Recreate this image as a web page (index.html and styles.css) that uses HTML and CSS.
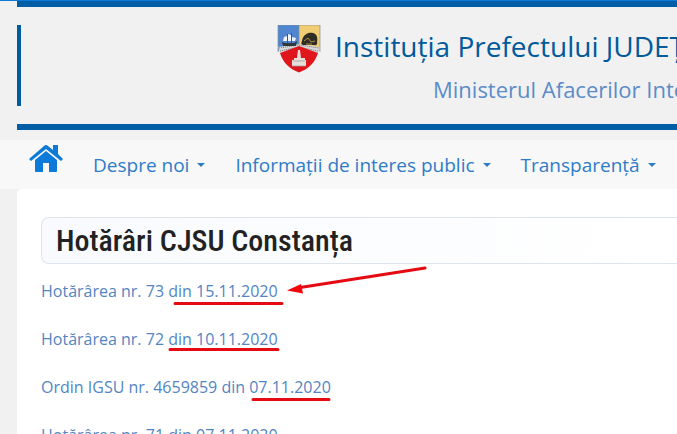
FILE: index.html
```html
<!DOCTYPE html>
<html lang="ro">
<head>
<meta charset="UTF-8">
<meta name="viewport" content="width=device-width, initial-scale=1.0">
<title>Hotărâri CJSU Constanța</title>
<link rel="stylesheet" href="styles.css">
</head>
<body>
    <header class="header">
        <div class="brand">
            <svg class="crest" viewBox="0 0 44 48" aria-hidden="true">
                <path fill="#4f86cf" d="M1 0H22V22L1 26Z"/>
                <path fill="#f0cc72" d="M22 0H43V26L22 22Z"/>
                <path fill="#d9d9d9" d="M1 22L22 19L43 22L41 29L22 23L3 29Z"/>
                <path fill="none" stroke="#777" stroke-width="1" stroke-dasharray="1 1" d="M2 23L22 20L42 23M3 26L22 22L41 26"/>
                <path fill="#e0161d" d="M3 28L22 21L41 28C38 38 31 44 22 47.500C13 44 6 38 3 28Z"/>
                <path fill="#303840" d="M5 17L8 18H17L20 16L19 21H6Z"/>
                <path fill="#eef4fa" d="M7 12L10 11V16H6ZM11 9L14 10V16H11ZM15 12L19 13L18 16H15Z"/>
                <path stroke="#303840" stroke-width=".6" d="M10.500 9V18M14.500 8V18"/>
                <path fill="#2f2c24" d="M25 16C26 9 32 7 36 8C40 9 41 13 40 17C41 19 39 21 37 20H27C24 20 24 18 25 16Z"/>
                <path fill="none" stroke="#c9aa58" stroke-width=".8" d="M27 16L31 13L34 17L38 16M29 19H35"/>
                <path fill="#e4e0dc" d="M21 25H23L24 33H28V35H29V41H15V35H17V33H20Z"/>
                <path stroke="#a59a94" stroke-width=".8" d="M16 36H28M15 41H29"/>
                <path fill="none" stroke="#8a8d95" stroke-width=".7" d="M22 0V20M1 27V0H43V27"/>
            </svg>
            <div class="brand-text">
                <div class="site-title">Instituția Prefectului JUDEȚUL CONSTANȚA</div>
                <div class="site-subtitle">Ministerul Afacerilor Interne</div>
            </div>
        </div>
    </header>

    <nav class="nav">
        <a class="home" href="#" aria-label="Acasă">
            <svg viewBox="0 0 34 28" aria-hidden="true">
                <path fill="#0b7ad8" d="M17 6L28 15V26Q28 27 27 27H20V18H14V27H7Q6 27 6 26V15Z"/>
                <path fill="#0b7ad8" d="M17 0Q18 0 19 1L24 5V0H29V9L34 14L32 16L17 4L2 16L0 14L15 1Q16 0 17 0Z"/>
            </svg>
        </a>
        <a class="nav-link" href="#">Despre noi</a>
        <a class="nav-link" href="#">Informaţii de interes public</a>
        <a class="nav-link" href="#">Transparenţă</a>
    </nav>

    <main class="content">
        <h1 class="page-title">Hotărâri CJSU Constanța</h1>
        <ul class="docs">
            <li><a href="#">Hotărârea nr. 73 din 15.11.2020</a></li>
            <li><a href="#">Hotărârea nr. 72 din 10.11.2020</a></li>
            <li><a href="#">Ordin IGSU nr. 4659859 din 07.11.2020</a></li>
            <li><a href="#">Hotărârea nr. 71 din 07.11.2020</a></li>
        </ul>
        <!-- red marks over the dates -->
        <svg class="marks" viewBox="0 0 660 245" aria-hidden="true">
            <path d="M158 114.500H265M153 160.500H261M236 210.500H312M408 79L280 99"/>
            <path class="tip" d="M270 101.500L284 95L286 104.500Z"/>
        </svg>
    </main>
</body>
</html>
```
FILE: styles.css
```css
* {
    box-sizing: border-box;
}
body {
    margin: 0;
    height: 100vh;
    overflow: hidden;
    background-color: #f1f1f1;
    border-top: 1px solid #0b7ad8;
    font-family: "Open Sans", "Noto Sans", sans-serif;
}
a {
    text-decoration: none;
}
.header {
    margin-left: 17px;
    padding: 18px 0;
    border-top: 6px solid #005da6;
    border-bottom: 6px solid #005da6;
    overflow: hidden;
}
.brand {
    display: flex;
    gap: 14px;
    height: 81px;
    padding-left: 256px;
    border-left: 4px solid #005c9e;
    white-space: nowrap;
}
.crest {
    flex: none;
    width: 44px;
    height: 48px;
}
.site-title {
    color: #005a9c;
    font-family: "Trebuchet MS", "Open Sans", sans-serif;
    font-size: 28px;
    line-height: 42px;
}
.site-subtitle {
    padding-left: 98px;
    color: #5b8cc8;
    font-size: 22px;
    line-height: 44px;
}
.nav {
    display: flex;
    align-items: center;
    gap: 30px;
    height: 49px;
    margin-top: 10px;
    padding-left: 29px;
    background-color: #f8f8f8;
    white-space: nowrap;
}
.home svg {
    display: block;
    width: 34px;
    height: 28px;
    margin-bottom: 12px;
}
.nav-link {
    display: flex;
    align-items: center;
    gap: 8px;
    color: #2e7cc9;
    font-size: 19px;
}
.nav-link::after {
    content: "";
    border: 4px solid transparent;
    border-top-color: #2e7cc9;
    border-bottom: 0;
}
.content {
    position: relative;
    min-height: 245px;
    margin-left: 17px;
    padding: 28px 0 0 24px;
    background-color: #fff;
    border-top-left-radius: 5px;
}
.page-title {
    margin: 0;
    padding-left: 14px;
    border: 1px solid #dfe5ee;
    border-right: 0;
    border-radius: 8px 0 0 8px;
    background-image: linear-gradient(to right, #f8fafd, #fff);
    color: #222;
    font-family: "Roboto Condensed", "Liberation Sans Narrow", Roboto, sans-serif;
    font-size: 30px;
    font-weight: 500;
    line-height: 45px;
}
.docs {
    margin: 0;
    padding: 15px 0 0;
    list-style: none;
}
.docs li {
    margin-bottom: 24px;
    font-size: 16px;
    line-height: 24px;
}
.docs a {
    color: #5385c2;
}
.marks {
    position: absolute;
    top: 0;
    left: 0;
    width: 660px;
    height: 245px;
    fill: none;
    stroke: #e60b12;
    stroke-width: 3;
    stroke-linecap: round;
    pointer-events: none;
}
.tip {
    fill: #f5050c;
    stroke: none;
}
```
